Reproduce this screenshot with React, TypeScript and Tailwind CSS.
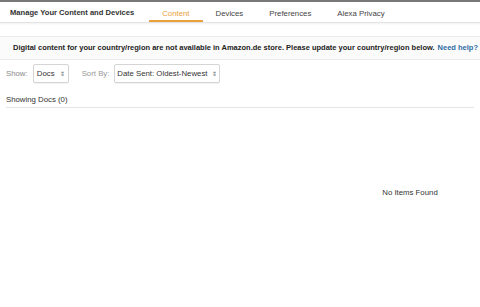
import React from 'react';

const tabs = ['Content', 'Devices', 'Preferences', 'Alexa Privacy'];

const Select = ({ label, width }: { label: string; width: string }) => (
  <div className={`flex items-center justify-center gap-[5px] h-[19px] border border-[#d5d5d5] rounded-[2px] bg-white text-[7.8px] text-[#333] whitespace-nowrap shadow-[0_1px_1px_rgba(0,0,0,0.06)] ${width}`}>
    <span>{label}</span>
    <span className="text-[6px] leading-none text-[#666]">&#8661;</span>
  </div>
);

export default function App() {
  return (
    <div className="w-[480px] h-[307px] bg-white overflow-hidden text-[#333]" style={{ fontFamily: '"Liberation Sans", Arial, sans-serif' }}>
      {/* top bar */}
      <div className="h-[2px] bg-[#777]" />
      <div className="flex items-stretch h-[21px] border-b border-[#e3e3e3] shadow-[0_1px_2px_rgba(0,0,0,0.06)]">
        <div className="pl-[10px] pr-[15px] pt-[5px] text-[7.6px] font-bold text-[#333] whitespace-nowrap">
          Manage Your Content and Devices
        </div>
        <div className="flex">
          {tabs.map((t, i) => (
            <div
              key={t}
              className={`px-[13px] pt-[6px] text-[7.8px] whitespace-nowrap ${
                i === 0 ? 'text-[#e9a13b] border-b-2 border-[#e9a13b]' : 'text-[#444]'
              }`}
            >
              {t}
            </div>
          ))}
        </div>
      </div>

      {/* notice banner */}
      <div className="mt-[13px] h-[24px] flex items-center pl-[13px] bg-[#fbfbfb] border-y border-[#eaeaea] text-[7.5px] font-bold text-[#222] whitespace-nowrap">
        <span>Digital content for your country/region are not available in Amazon.de store. Please update your country/region below.</span>
        <a className="ml-[3px] text-[#2e6da4]">Need help?</a>
      </div>

      {/* filters */}
      <div className="flex items-center px-[6px] mt-[4px] h-[19px] text-[7.8px]">
        <span className="text-[#888]">Show:</span>
        <div className="ml-[5px]">
          <Select label="Docs" width="w-[36px]" />
        </div>
        <span className="ml-[13px] text-[#999]">Sort By:</span>
        <div className="ml-[5px]">
          <Select label="Date Sent: Oldest-Newest" width="w-[106px]" />
        </div>
      </div>

      <div className="mx-[6px] mt-[11px] pb-[1px] border-b border-[#e6e6e6] text-[7.8px] text-[#333]">
        Showing Docs (0)
      </div>

      <div className="flex">
        <div className="flex-1" />
        <div className="w-[140px] pt-[79px] text-center text-[7.8px] text-[#333]">No Items Found</div>
      </div>
    </div>
  );
}
